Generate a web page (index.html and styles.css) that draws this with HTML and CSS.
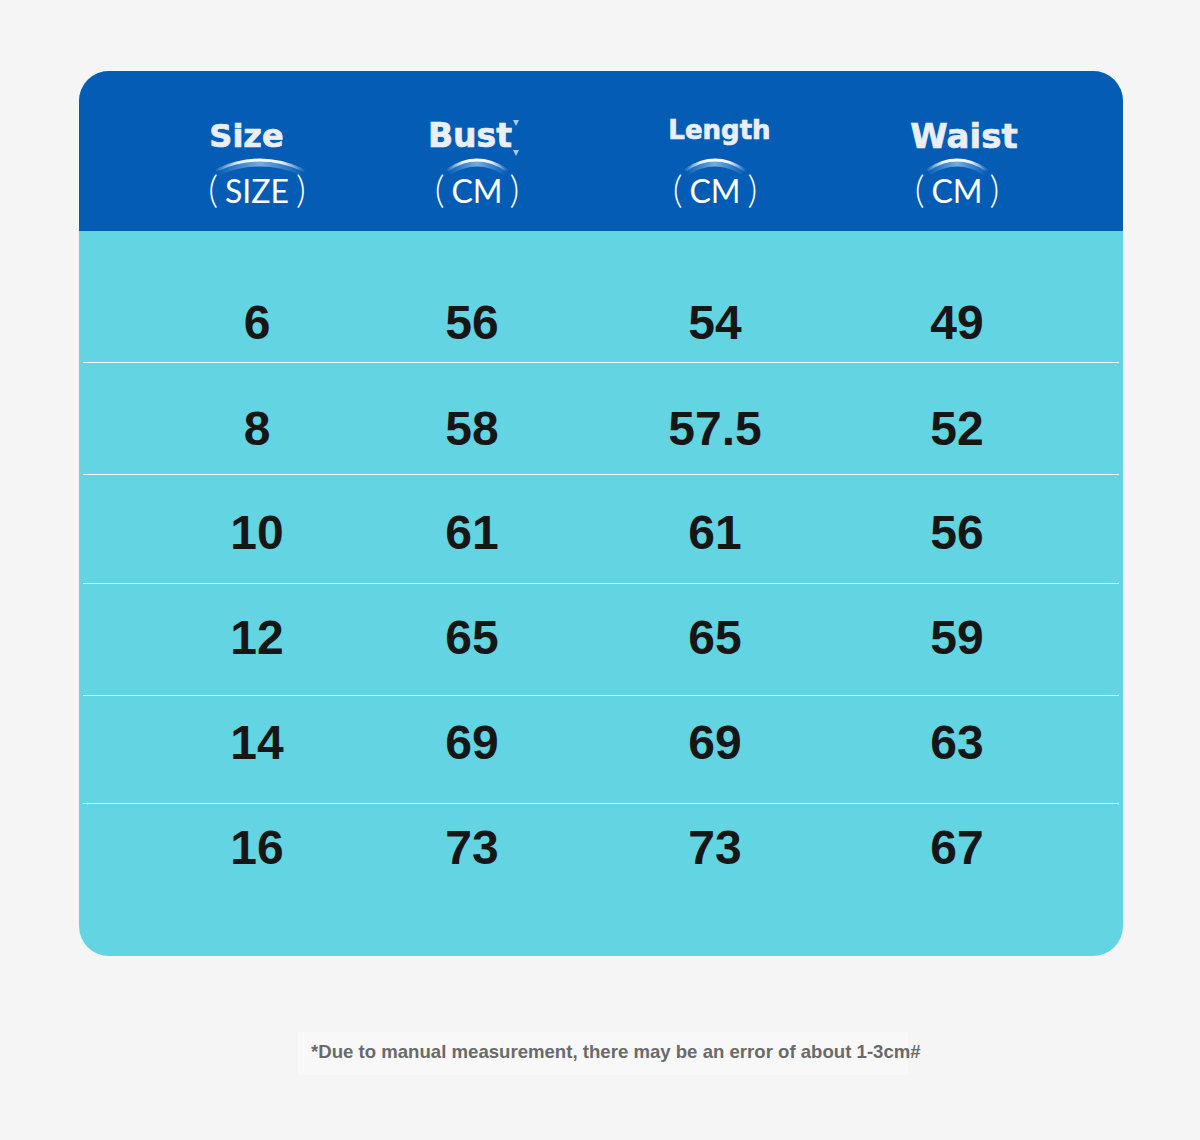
FILE: index.html
```html
<!DOCTYPE html>
<html lang="en">
<head>
<meta charset="utf-8">
<title>Size chart</title>
<link rel="stylesheet" href="styles.css">
</head>
<body>
<svg class="defs" width="0" height="0" aria-hidden="true">
  <defs>
    <linearGradient id="arcGrad" x1="0" y1="0" x2="1" y2="0">
      <stop offset="0" stop-color="#ffffff" stop-opacity="0.1"/>
      <stop offset="0.25" stop-color="#ffffff" stop-opacity="0.9"/>
      <stop offset="0.5" stop-color="#ffffff" stop-opacity="1"/>
      <stop offset="0.75" stop-color="#ffffff" stop-opacity="0.9"/>
      <stop offset="1" stop-color="#ffffff" stop-opacity="0.1"/>
    </linearGradient>
    <linearGradient id="glowGrad" x1="0" y1="0" x2="1" y2="0">
      <stop offset="0" stop-color="#b8dcff" stop-opacity="0"/>
      <stop offset="0.5" stop-color="#c4e2ff" stop-opacity="0.6"/>
      <stop offset="1" stop-color="#b8dcff" stop-opacity="0"/>
    </linearGradient>
  </defs>
</svg>
<div class="page">
  <div class="card">
    <div class="head">
      <div class="hcell">
        <div class="title title--size">Size</div>
        <svg class="arc arc--wide" viewBox="0 0 92 18"><path class="glow" d="M3,19 Q46,0 89,19"/><path class="line" d="M3,16 Q46,-4 89,16"/></svg>
        <div class="sub"><span class="par">(</span>SIZE<span class="par">)</span></div>
      </div>
      <div class="hcell">
        <div class="title title--bust">Bust<span class="tick tick--top"></span><span class="tick tick--bottom"></span></div>
        <svg class="arc arc--bust" viewBox="0 0 66 18"><path class="glow" d="M3,19 Q33,0 63,19"/><path class="line" d="M3,16 Q33,-4 63,16"/></svg>
        <div class="sub sub--bust"><span class="par">(</span>CM<span class="par">)</span></div>
      </div>
      <div class="hcell">
        <div class="title title--length">Length</div>
        <svg class="arc" viewBox="0 0 66 18"><path class="glow" d="M3,19 Q33,0 63,19"/><path class="line" d="M3,16 Q33,-4 63,16"/></svg>
        <div class="sub"><span class="par">(</span>CM<span class="par">)</span></div>
      </div>
      <div class="hcell">
        <div class="title title--waist">Waist</div>
        <svg class="arc" viewBox="0 0 66 18"><path class="glow" d="M3,19 Q33,0 63,19"/><path class="line" d="M3,16 Q33,-4 63,16"/></svg>
        <div class="sub"><span class="par">(</span>CM<span class="par">)</span></div>
      </div>
    </div>
    <div class="rows">
      <div class="row"><span>6</span><span>56</span><span>54</span><span>49</span></div>
      <div class="row"><span>8</span><span>58</span><span>57.5</span><span>52</span></div>
      <div class="row"><span>10</span><span>61</span><span>61</span><span>56</span></div>
      <div class="row"><span>12</span><span>65</span><span>65</span><span>59</span></div>
      <div class="row"><span>14</span><span>69</span><span>69</span><span>63</span></div>
      <div class="row"><span>16</span><span>73</span><span>73</span><span>67</span></div>
    </div>
  </div>
  <div class="note">*Due to manual measurement, there may be an error of about 1-3cm#</div>
</div>
</body>
</html>
```
FILE: styles.css
```css
html, body {
  margin: 0;
  padding: 0;
  background: #f5f5f5;
}

.defs {
  position: absolute;
  width: 0;
  height: 0;
}

.page {
  width: 1200px;
  height: 1140px;
  padding-top: 71px;
  box-sizing: border-box;
}

.card {
  margin-left: 79px;
  width: 1044px;
  height: 885px;
  border-radius: 30px;
  overflow: hidden;
  background: #62d4e2;
  display: flex;
  flex-direction: column;
}

.head {
  height: 160px;
  flex: none;
  background: #045cb4;
  box-sizing: border-box;
  padding: 47px 0 0 71px;
  display: grid;
  grid-template-columns: 214px 216px 270px 214px;
  align-items: start;
}

.hcell {
  display: flex;
  flex-direction: column;
  align-items: center;
}

.title {
  font-family: "DejaVu Sans", sans-serif;
  font-weight: bold;
  color: #e9eef7;
  -webkit-text-stroke: 0.7px #e9eef7;
  height: 36px;
  line-height: 36px;
  white-space: nowrap;
  position: relative;
}

.title--size {
  font-size: 32px;
  margin-right: 21px;
}

.title--bust {
  font-size: 33px;
  margin-right: 4px;
}

.title--length {
  font-size: 26px;
  line-height: 24px;
  margin-left: 9px;
}

.title--waist {
  font-size: 34px;
  margin-left: 14px;
}

.tick {
  position: absolute;
  right: -7px;
  width: 0;
  height: 0;
  border-left: 3px solid transparent;
  border-right: 3px solid transparent;
  border-top: 6px solid #a8cdf2;
}

.tick--top {
  top: 2px;
}

.tick--bottom {
  top: 32px;
}

.arc {
  display: block;
  width: 64px;
  height: 18px;
  overflow: visible;
}

.arc--wide {
  width: 92px;
  margin-left: 6px;
}

.arc--bust {
  margin-left: 10px;
}

.arc .line {
  fill: none;
  stroke: url(#arcGrad);
  stroke-width: 3;
  stroke-linecap: round;
}

.arc .glow {
  fill: none;
  stroke: url(#glowGrad);
  stroke-width: 6;
}

.sub {
  margin-top: 0;
  font-family: "Lato", "DejaVu Sans", sans-serif;
  font-weight: 400;
  font-size: 32px;
  line-height: 32px;
  height: 32px;
  color: #ffffff;
  white-space: nowrap;
  display: flex;
  align-items: baseline;
}

.sub--bust {
  margin-left: 10px;
}

.par {
  font-weight: 300;
  font-size: 38px;
  margin: 0 7px;
  display: inline-block;
}

.rows {
  flex: 1;
  padding: 0 4px;
}

.row {
  box-sizing: border-box;
  border-bottom: 1px solid #ffffff;
  display: grid;
  grid-template-columns: 214px 216px 270px 214px;
  padding-left: 67px;
  align-items: start;
}

.row span {
  text-align: center;
  font-family: "Liberation Sans", Arial, sans-serif;
  font-weight: bold;
  font-size: 48px;
  line-height: 48px;
  color: #161616;
}

.row:nth-child(1) { height: 132px; padding-top: 68px; }
.row:nth-child(2) { height: 112px; padding-top: 42px; }
.row:nth-child(3) { height: 109px; padding-top: 34px; }
.row:nth-child(4) { height: 112px; padding-top: 30px; }
.row:nth-child(5) { height: 108px; padding-top: 23px; }
.row:nth-child(6) { height: 152px; padding-top: 20px; border-bottom: none; }

.note {
  margin: 76px 0 0 298px;
  width: 610px;
  height: 43px;
  box-sizing: border-box;
  padding-left: 13px;
  background: #f8f8f8;
  font-family: "Liberation Sans", Arial, sans-serif;
  font-weight: bold;
  font-size: 18.6px;
  line-height: 39px;
  color: #6a6a6a;
  white-space: nowrap;
}
```
